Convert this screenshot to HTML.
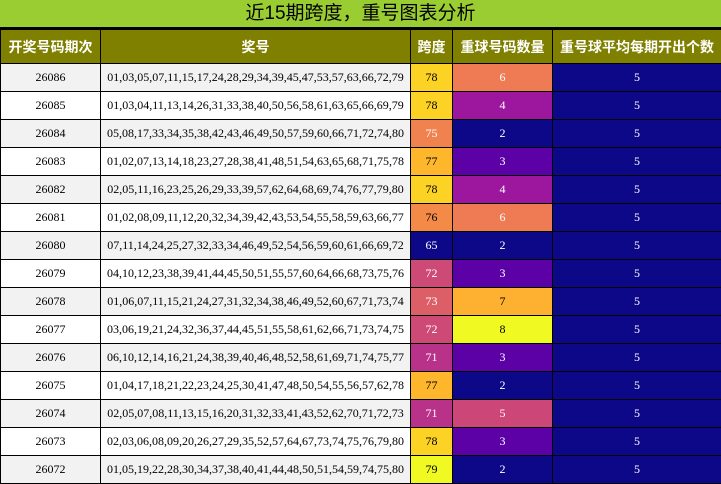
<!DOCTYPE html>
<html><head><meta charset="utf-8"><style>
*{margin:0;padding:0;box-sizing:border-box}
body{width:721px;height:484px;overflow:hidden;background:#fff;font-family:"Liberation Serif","Noto Serif CJK SC",serif}
.title{position:absolute;left:0;top:0;width:721px;height:29px;background:#9acd32;border-bottom:2px solid #000;text-align:center;font:19px/27px "Liberation Sans","Noto Sans CJK SC",sans-serif;color:#000}
table{position:absolute;left:0;top:29px;border-collapse:collapse;table-layout:fixed;width:721px}
td,th{border:1px solid #000;text-align:center;font-size:12px;height:28px;padding:0;overflow:hidden;white-space:nowrap}
th{background:#808000;color:#fff;font:bold 14px "Liberation Sans","Noto Sans CJK SC",sans-serif;height:34px}
tr:nth-child(even) td{background:#f2f2f2}
tr:nth-child(odd) td{background:#fff}
td.n{font-size:12px}
td.w{color:#fff!important}
</style></head><body>
<div class="title">近15期跨度，重号图表分析</div>
<table>
<colgroup><col style="width:100px"><col style="width:310px"><col style="width:42px"><col style="width:100px"><col style="width:169px"></colgroup>
<tr><th>开奖号码期次</th><th>奖号</th><th>跨度</th><th>重球号码数量</th><th>重号球平均每期开出个数</th></tr>
<tr><td>26086</td><td class="n">01,03,05,07,11,15,17,24,28,29,34,39,45,47,53,57,63,66,72,79</td><td style="background:#fcd225">78</td><td class="w" style="background:#ef7b55">6</td><td class="w" style="background:#0d0887">5</td></tr>
<tr><td>26085</td><td class="n">01,03,04,11,13,14,26,31,33,38,40,50,56,58,61,63,65,66,69,79</td><td style="background:#fcd225">78</td><td class="w" style="background:#9c179e">4</td><td class="w" style="background:#0d0887">5</td></tr>
<tr><td>26084</td><td class="n">05,08,17,33,34,35,38,42,43,46,49,50,57,59,60,66,71,72,74,80</td><td class="w" style="background:#f0824f">75</td><td class="w" style="background:#0d0887">2</td><td class="w" style="background:#0d0887">5</td></tr>
<tr><td>26083</td><td class="n">01,02,07,13,14,18,23,27,28,38,41,48,51,54,63,65,68,71,75,78</td><td style="background:#feb72c">77</td><td class="w" style="background:#5c01a6">3</td><td class="w" style="background:#0d0887">5</td></tr>
<tr><td>26082</td><td class="n">02,05,11,16,23,25,26,29,33,39,57,62,64,68,69,74,76,77,79,80</td><td style="background:#fcd225">78</td><td class="w" style="background:#9c179e">4</td><td class="w" style="background:#0d0887">5</td></tr>
<tr><td>26081</td><td class="n">01,02,08,09,11,12,20,32,34,39,42,43,53,54,55,58,59,63,66,77</td><td style="background:#f48a48">76</td><td class="w" style="background:#ef7b55">6</td><td class="w" style="background:#0d0887">5</td></tr>
<tr><td>26080</td><td class="n">07,11,14,24,25,27,32,33,34,46,49,52,54,56,59,60,61,66,69,72</td><td class="w" style="background:#0d0887">65</td><td class="w" style="background:#0d0887">2</td><td class="w" style="background:#0d0887">5</td></tr>
<tr><td>26079</td><td class="n">04,10,12,23,38,39,41,44,45,50,51,55,57,60,64,66,68,73,75,76</td><td class="w" style="background:#cd4a76">72</td><td class="w" style="background:#5c01a6">3</td><td class="w" style="background:#0d0887">5</td></tr>
<tr><td>26078</td><td class="n">01,06,07,11,15,21,24,27,31,32,34,38,46,49,52,60,67,71,73,74</td><td class="w" style="background:#dc5f67">73</td><td style="background:#feb130">7</td><td class="w" style="background:#0d0887">5</td></tr>
<tr><td>26077</td><td class="n">03,06,19,21,24,32,36,37,44,45,51,55,58,61,62,66,71,73,74,75</td><td class="w" style="background:#cd4a76">72</td><td style="background:#f0f921">8</td><td class="w" style="background:#0d0887">5</td></tr>
<tr><td>26076</td><td class="n">06,10,12,14,16,21,24,38,39,40,46,48,52,58,61,69,71,74,75,77</td><td class="w" style="background:#b8328a">71</td><td class="w" style="background:#5c01a6">3</td><td class="w" style="background:#0d0887">5</td></tr>
<tr><td>26075</td><td class="n">01,04,17,18,21,22,23,24,25,30,41,47,48,50,54,55,56,57,62,78</td><td style="background:#feb72c">77</td><td class="w" style="background:#0d0887">2</td><td class="w" style="background:#0d0887">5</td></tr>
<tr><td>26074</td><td class="n">02,05,07,08,11,13,15,16,20,31,32,33,41,43,52,62,70,71,72,73</td><td class="w" style="background:#b8328a">71</td><td class="w" style="background:#cc4778">5</td><td class="w" style="background:#0d0887">5</td></tr>
<tr><td>26073</td><td class="n">02,03,06,08,09,20,26,27,29,35,52,57,64,67,73,74,75,76,79,80</td><td style="background:#fcd225">78</td><td class="w" style="background:#5c01a6">3</td><td class="w" style="background:#0d0887">5</td></tr>
<tr><td>26072</td><td class="n">01,05,19,22,28,30,34,37,38,40,41,44,48,50,51,54,59,74,75,80</td><td style="background:#f0f921">79</td><td class="w" style="background:#0d0887">2</td><td class="w" style="background:#0d0887">5</td></tr>
</table>
</body></html>
